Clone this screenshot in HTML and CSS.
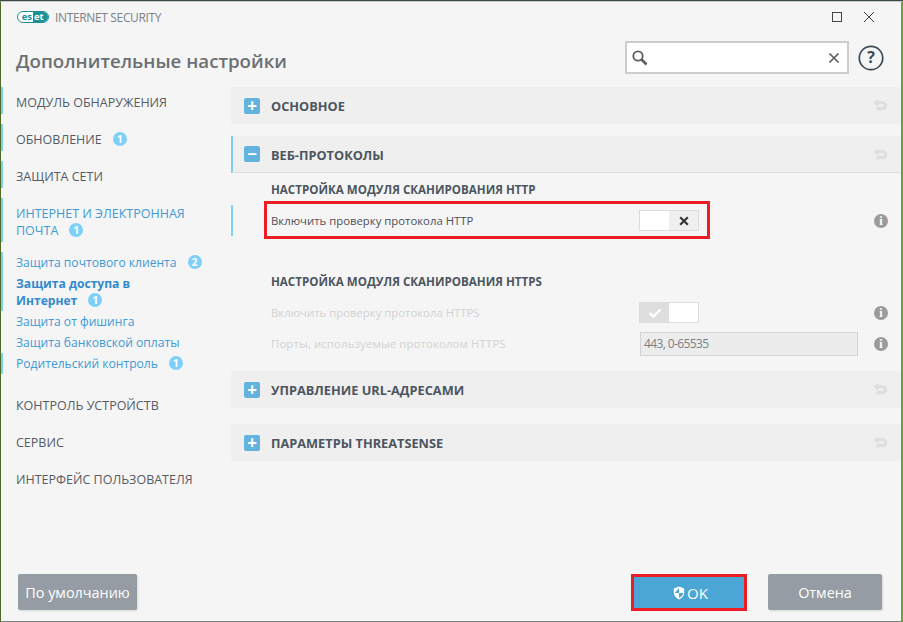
FILE: index.html
```html
<!DOCTYPE html>
<html lang="ru">
<head>
<meta charset="utf-8">
<title>ESET Internet Security</title>
<link rel="stylesheet" href="styles.css">
</head>
<body>
<div class="window">
  <header class="titlebar">
    <div class="brand">
      <span class="logo"><span class="logo-a">es</span><span class="logo-b">et</span></span>
      <span class="product">INTERNET SECURITY</span>
    </div>
    <div class="winctl">
      <svg class="ctl" width="12" height="12" viewBox="0 0 12 12"><rect x="1.500" y="1.500" width="9" height="9" fill="none" stroke="#444" stroke-width="1"/></svg>
      <svg class="ctl" width="12" height="12" viewBox="0 0 12 12"><path d="M1 1l10 10M11 1L1 11" stroke="#444" stroke-width="1" fill="none"/></svg>
    </div>
  </header>
  <div class="headrow">
    <h1 class="title">Дополнительные настройки</h1>
    <div class="search">
      <svg width="18" height="18" viewBox="0 0 18 18"><circle cx="7" cy="7" r="4.700" fill="none" stroke="#5a5f64" stroke-width="1.800"/><path d="M10.500 10.500l5 5" stroke="#5a5f64" stroke-width="2.600"/></svg>
      <svg width="12" height="12" viewBox="0 0 12 12"><path d="M1.500 1.500l9 9M10.500 1.500l-9 9" stroke="#5a5f64" stroke-width="1.700" fill="none"/></svg>
    </div>
    <svg class="help" width="26" height="26" viewBox="0 0 26 26"><circle cx="13" cy="13" r="11.700" fill="none" stroke="#3d4a56" stroke-width="1.700"/><text x="13" y="18.200" text-anchor="middle" class="help-q">?</text></svg>
  </div>
  <div class="main">
    <nav class="sidebar">
      <a class="nav bar">МОДУЛЬ ОБНАРУЖЕНИЯ</a>
      <a class="nav bar">ОБНОВЛЕНИЕ<span class="badge">1</span></a>
      <a class="nav bar">ЗАЩИТА СЕТИ</a>
      <a class="nav bar active"><span class="line">ИНТЕРНЕТ И ЭЛЕКТРОННАЯ</span><span class="line">ПОЧТА<span class="badge">1</span></span></a>
      <div class="sublist">
        <a class="sub bar">Защита почтового клиента<span class="badge">2</span></a>
        <a class="sub bar current"><span class="line">Защита доступа в</span><span class="line">Интернет<span class="badge">1</span></span></a>
        <a class="sub">Защита от фишинга</a>
        <a class="sub">Защита банковской оплаты</a>
        <a class="sub bar">Родительский контроль<span class="badge">1</span></a>
      </div>
      <a class="nav">КОНТРОЛЬ УСТРОЙСТВ</a>
      <a class="nav">СЕРВИС</a>
      <a class="nav">ИНТЕРФЕЙС ПОЛЬЗОВАТЕЛЯ</a>
    </nav>
    <section class="content">
      <div class="sect">
        <span class="tog">+</span><span class="sect-name">ОСНОВНОЕ</span>
        <svg class="undo" width="14" height="13" viewBox="0 0 14 13"><path d="M5.500 0L0 3.700l5.500 3.700V5.300h4.300a1.300 1.300 0 010 2.700H3.500v3.200h6.300a4.500 4.500 0 000-9H5.500z" fill="#dedede"/></svg>
      </div>
      <div class="sect open">
        <span class="tog">−</span><span class="sect-name">ВЕБ-ПРОТОКОЛЫ</span>
        <svg class="undo" width="14" height="13" viewBox="0 0 14 13"><path d="M5.500 0L0 3.700l5.500 3.700V5.300h4.300a1.300 1.300 0 010 2.700H3.500v3.200h6.300a4.500 4.500 0 000-9H5.500z" fill="#dedede"/></svg>
      </div>
      <div class="sect-body">
        <h2 class="subhead">НАСТРОЙКА МОДУЛЯ СКАНИРОВАНИЯ HTTP</h2>
        <div class="row changed">
          <span class="label">Включить проверку протокола HTTP</span>
          <span class="switch"><span class="sw-white"></span><span class="sw-x"><svg width="10" height="10" viewBox="0 0 10 10"><path d="M1.200 1.200l7.600 7.600M8.800 1.200L1.200 8.800" stroke="#333" stroke-width="2.100" fill="none"/></svg></span></span>
          <span class="info">i</span>
          <span class="redbox"></span>
        </div>
        <h2 class="subhead second">НАСТРОЙКА МОДУЛЯ СКАНИРОВАНИЯ HTTPS</h2>
        <div class="row">
          <span class="label off">Включить проверку протокола HTTPS</span>
          <span class="switch"><span class="sw-check"><svg width="14" height="10" viewBox="0 0 14 10"><path d="M1.500 5l3.800 3.500L12.500 1.500" stroke="#fff" stroke-width="2.400" fill="none"/></svg></span><span class="sw-white"></span></span>
          <span class="info">i</span>
        </div>
        <div class="row">
          <span class="label off wide">Порты, используемые протоколом HTTPS</span>
          <span class="field">443, 0-65535</span>
          <span class="info">i</span>
        </div>
      </div>
      <div class="sect">
        <span class="tog">+</span><span class="sect-name">УПРАВЛЕНИЕ URL-АДРЕСАМИ</span>
        <svg class="undo" width="14" height="13" viewBox="0 0 14 13"><path d="M5.500 0L0 3.700l5.500 3.700V5.300h4.300a1.300 1.300 0 010 2.700H3.500v3.200h6.300a4.500 4.500 0 000-9H5.500z" fill="#dedede"/></svg>
      </div>
      <div class="sect last">
        <span class="tog">+</span><span class="sect-name">ПАРАМЕТРЫ THREATSENSE</span>
        <svg class="undo" width="14" height="13" viewBox="0 0 14 13"><path d="M5.500 0L0 3.700l5.500 3.700V5.300h4.300a1.300 1.300 0 010 2.700H3.500v3.200h6.300a4.500 4.500 0 000-9H5.500z" fill="#dedede"/></svg>
      </div>
    </section>
  </div>
  <footer class="footer">
    <button class="btn default">По умолчанию</button>
    <button class="btn ok"><svg width="12" height="14" viewBox="0 0 12 14"><path d="M6 .5l5.200 2v4c0 3.200-2.200 5.600-5.200 7-3-1.400-5.200-3.800-5.200-7v-4z" fill="#fff"/><path d="M6 2v5H1.800M6 7h4.200c-.3 2.300-2 3.800-4.200 5z" fill="#4ba6d6"/></svg>OK</button>
    <button class="btn cancel">Отмена</button>
  </footer>
</div>
</body>
</html>
```

FILE: styles.css
```css
* { box-sizing: border-box; }
html, body { margin: 0; padding: 0; }
body {
  width: 903px;
  height: 622px;
  overflow: hidden;
  background: #3b4a44;
  font-family: "Open Sans", "Noto Sans", sans-serif;
  color: #4f5861;
}
.window {
  width: 903px;
  height: 621px;
  margin-top: 1px;
  background: #f5f5f5;
  border-left: 1px solid #4e6a25;
  border-right: 2px solid #6aa52a;
  border-top: 1px solid #c9c9c9;
  border-bottom: 1px solid #7d8580;
  display: flex;
  flex-direction: column;
}
.titlebar {
  height: 30px;
  display: flex;
  align-items: center;
  justify-content: space-between;
  padding: 0 26px 0 16px;
  flex: none;
}
.brand { display: flex; align-items: center; gap: 6px; }
.logo {
  display: inline-flex;
  height: 12px;
  width: 32px;
  border: 1px solid #1d8f97;
  border-radius: 6px;
  overflow: hidden;
  font-size: 9.5px;
  line-height: 9px;
  font-weight: 700;
  background: #fff;
  color: #1d8f97;
}
.logo-a { width: 15px; text-align: right; padding-right: 1px; }
.logo-b { flex: 1; background: #1d8f97; color: #fff; padding-left: 1px; }
.product { font-size: 12px; letter-spacing: -0.35px; color: #7c8287; }
.winctl { display: flex; gap: 20px; }
.ctl { display: block; }
.headrow {
  height: 55px;
  display: flex;
  align-items: center;
  padding: 0 17px 4px 15px;
  flex: none;
}
.title {
  margin: 5px 0 0;
  font-size: 18.7px;
  font-weight: 600;
  color: #6c7074;
  flex: 1;
}
.search {
  width: 224px;
  height: 33px;
  background: #fff;
  border: 2px solid #cdcdcd;
  display: flex;
  align-items: center;
  justify-content: space-between;
  padding: 0 7px 0 4px;
}
.help { margin: 1px 0 0 9px; display: block; }
.help-q { font-size: 16px; font-weight: 700; fill: #3d4a56; font-family: "Open Sans", sans-serif; }
.main { flex: 1; display: flex; min-height: 0; }
.sidebar {
  width: 230px;
  flex: none;
  display: flex;
  flex-direction: column;
  gap: 10px;
}
.line { display: block; }
.nav {
  display: block;
  min-height: 27px;
  padding: 7px 30px 3px 13px;
  border-left: 2px solid transparent;
  font-size: 12.5px;
  line-height: 17px;
  color: #555c66;
}
.nav.bar, .sub.bar { border-left-color: #7fcdf0; }
.nav.active { color: #3f9ad6; }
.sublist { display: flex; flex-direction: column; margin-bottom: 6px; }
.sub {
  display: block;
  padding: 2px 20px 2px 13px;
  border-left: 2px solid transparent;
  font-size: 12.1px;
  line-height: 17px;
  color: #3f9ad6;
}
.sub.current { font-weight: 700; color: #3389cc; }
.badge {
  display: inline-block;
  width: 14px;
  height: 14px;
  margin-left: 11px;
  border-radius: 50%;
  background: #7fd0f9;
  color: #fff;
  font-size: 10px;
  line-height: 14px;
  font-weight: 700;
  text-align: center;
  vertical-align: 1px;
}
.content { flex: 1; min-width: 0; }
.sect {
  height: 37px;
  display: flex;
  align-items: center;
  background: #efefef;
  padding: 0 14px 0 13px;
  margin-bottom: 12px;
}
.sect.open {
  border-left: 2px solid #7fcdf0;
  border-bottom: 1px solid #dcdcdc;
  padding-left: 11px;
  margin-bottom: 0;
}
.sect.last { margin-top: 16px; }
.tog {
  width: 16px;
  height: 16px;
  border-radius: 2px;
  background: #62b4de;
  color: #fff;
  font-size: 17px;
  font-weight: 700;
  line-height: 15px;
  text-align: center;
  flex: none;
}
.sect-name {
  margin-left: 11px;
  padding-top: 1px;
  font-size: 12.75px;
  font-weight: 700;
  color: #4c5560;
  flex: 1;
}
.open .sect-name { padding-top: 2px; }
.undo { flex: none; display: block; }
.sect-body { height: 198px; padding-top: 8px; }
.subhead {
  margin: 0;
  padding-left: 40px;
  font-size: 11.6px;
  line-height: 18px;
  font-weight: 700;
  color: #4c5560;
}
.subhead.second { margin-top: 37px; margin-bottom: 6px; }
.row {
  position: relative;
  display: grid;
  grid-template-columns: 368px 1fr 14px;
  align-items: center;
  height: 31px;
  padding: 0 13px 0 38px;
  border-left: 2px solid transparent;
}
.row.changed { border-left-color: #7fd0f9; margin-top: 6px; }
.label { font-size: 11.35px; color: #4f4f5a; padding-bottom: 1px; }
.label.off { color: #d2d2d2; }
.label.wide { letter-spacing: 0.14px; }
.switch {
  display: flex;
  width: 60px;
  height: 21px;
  border: 1px solid #dcdcdc;
  background: #fff;
}
.sw-white { width: 29px; background: #fff; }
.sw-x { flex: 1; background: #efefef; display: flex; align-items: center; justify-content: center; }
.sw-check { width: 29px; background: #dedede; display: flex; align-items: center; justify-content: center; }
.field {
  width: 218px;
  height: 24px;
  margin-left: 1px;
  border: 1px solid #d4d4d4;
  background: #ececec;
  font-size: 12px;
  letter-spacing: -0.6px;
  line-height: 22px;
  padding-left: 3px;
  color: #7a8088;
}
.info {
  width: 14px;
  height: 14px;
  border-radius: 50%;
  background: #9b9b9b;
  color: #fff;
  font-family: "Liberation Serif", serif;
  font-size: 12px;
  font-weight: 700;
  line-height: 14px;
  text-align: center;
}
.redbox {
  position: absolute;
  left: 31px;
  top: -4px;
  width: 446px;
  height: 38px;
  border: 3px solid #ec1c24;
}
.footer {
  flex: none;
  height: 47px;
  display: flex;
  align-items: flex-start;
  padding-left: 17px;
}
.btn {
  height: 36px;
  border: 0;
  border-radius: 2px;
  background: #959ca3;
  color: #fff;
  font-family: inherit;
  font-size: 14.4px;
  box-shadow: 1px 1px 2px rgba(0,0,0,.12);
  padding: 0;
}
.default { width: 119px; }
.ok {
  width: 116px;
  height: 37px;
  margin-left: 494px;
  border-radius: 0;
  border: 3px solid #ec1c24;
  background: #4ba6d6;
  box-shadow: none;
  display: flex;
  align-items: center;
  justify-content: center;
  gap: 2px;
  padding-left: 3px;
  font-size: 15px;
}
.cancel { width: 114px; margin-left: 21px; }
```
